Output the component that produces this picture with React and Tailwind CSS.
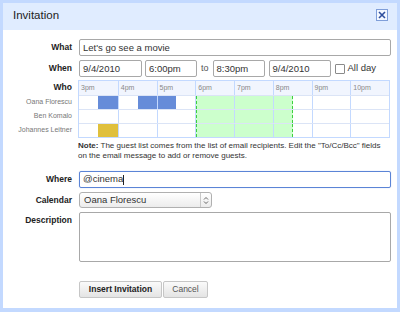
import { useState } from 'react';

const hours = ['3pm', '4pm', '5pm', '6pm', '7pm', '8pm', '9pm', '10pm'];

// busy slots per guest, in half-hour steps from 3pm (index 0 = 3:00-3:30)
const guests = [
  { name: 'Oana Florescu', busy: { 1: 'blue', 3: 'blue', 4: 'blue' } },
  { name: 'Ben Komalo', busy: {} },
  { name: 'Johannes Leitner', busy: { 1: 'yellow' } },
];

const label = "w-[70px] shrink-0 text-right pr-[1px] text-[8.5px] font-bold text-[#222] font-['Liberation_Sans',sans-serif]";
const input = "h-[17px] border border-[#a8a8a8] rounded-[2px] bg-white px-[3px] text-[9.5px] text-[#333] leading-[15px] font-['Liberation_Sans',sans-serif]";

function HalfCell({ slot, color }) {
  const inEvent = slot >= 6 && slot <= 10;
  let bg = '';
  if (color === 'blue') bg = 'bg-[#668cd9]';
  else if (color === 'yellow') bg = 'bg-[#e0c03c]';
  else if (inEvent) bg = 'bg-[#ccffcc]';
  const edge =
    slot === 6 ? 'border-l border-dashed border-l-[#3fcf3f]' : slot === 10 ? 'border-r border-dashed border-r-[#3fcf3f]' : '';
  return <div className={`flex-1 h-full ${bg} ${edge}`} />;
}

function Chart() {
  return (
    <div className="w-[312px] border border-[#c3d9ff] font-['Liberation_Sans',sans-serif]">
      <div className="flex h-[14px] bg-[#f1f5fe]">
        {hours.map((h, i) => (
          <div
            key={h}
            className={`w-[39px] h-full pl-[2px] text-[7px] leading-[13px] text-[#888] ${i ? 'border-l border-[#c3d9ff]' : ''}`}
          >
            {h}
          </div>
        ))}
      </div>
      {guests.map((g) => (
        <div key={g.name} className="flex h-[14px] border-t border-[#dbe4f6]">
          {hours.map((h, i) => (
            <div key={h} className={`w-[39px] h-full flex ${i ? 'border-l border-[#c3d9ff]' : ''}`}>
              <HalfCell slot={i * 2} color={g.busy[i * 2]} />
              <HalfCell slot={i * 2 + 1} color={g.busy[i * 2 + 1]} />
            </div>
          ))}
        </div>
      ))}
    </div>
  );
}

export default function App() {
  const [where, setWhere] = useState('@cinema');

  return (
    <div className="w-[400px] h-[312px] bg-[#c3d9ff] pt-[3px] px-[3px] pb-[4px] flex flex-col">
      <div className="h-[27px] shrink-0 bg-[#e0ecff] flex items-center justify-between pl-[10px] pr-[9px]">
        <span className="text-[11.5px] text-[#222] font-['Liberation_Sans',sans-serif] mt-[-2px]">Invitation</span>
        <div className="w-[12px] h-[12px] border border-[#7f9ed9] bg-[#f4f8ff] flex items-center justify-center mt-[-3px]">
          <svg width="8" height="8" viewBox="0 0 8 8">
            <path d="M1 1 L7 7 M7 1 L1 7" stroke="#2f4f9e" strokeWidth="1.6" />
          </svg>
        </div>
      </div>

      <div className="flex-1 bg-white pr-[6px]">
        {/* What */}
        <div className="flex items-center mt-[9px]">
          <div className={label}>What</div>
          <div className={`${input} ml-[6px] flex-1`}>Let's go see a movie</div>
        </div>

        {/* When */}
        <div className="flex items-center mt-[4px]">
          <div className={label}>When</div>
          <div className="ml-[6px] flex items-center">
            <div className={`${input} w-[63px]`}>9/4/2010</div>
            <div className={`${input} w-[52px] ml-[3px]`}>6:00pm</div>
            <span className="mx-[4px] text-[9px] text-[#555] font-['Liberation_Sans',sans-serif]">to</span>
            <div className={`${input} w-[52px]`}>8:30pm</div>
            <div className={`${input} w-[62px] ml-[4px]`}>9/4/2010</div>
            <div className="w-[10px] h-[10px] ml-[4px] border border-[#8a8a8a] rounded-[1px] bg-white" />
            <span className="ml-[3px] text-[9.5px] text-[#333] font-['Liberation_Sans',sans-serif]">All day</span>
          </div>
        </div>

        {/* Who */}
        <div className="flex mt-[3px]">
          <div className="w-[70px] shrink-0 flex flex-col items-end pr-[1px]">
            <div className="h-[15px] flex items-center text-[8.5px] font-bold text-[#222] font-['Liberation_Sans',sans-serif]">Who</div>
            {guests.map((g) => (
              <div key={g.name} className="h-[14px] flex items-center text-[7px] text-[#777] font-['Liberation_Sans',sans-serif]">
                {g.name}
              </div>
            ))}
          </div>
          <div className="ml-[5px]">
            <Chart />
            <p className="mt-[3px] text-[8px] leading-[10px] text-[#333] font-['Liberation_Sans',sans-serif]">
              <b>Note:</b> The guest list comes from the list of email recipients. Edit the "To/Cc/Bcc" fields
              <br />
              on the email message to add or remove guests.
            </p>
          </div>
        </div>

        {/* Where */}
        <div className="flex items-center mt-[10px]">
          <div className={label}>Where</div>
          <div className="ml-[6px] flex-1 h-[17px] border border-[#5b84d6] rounded-[2px] px-[3px] flex items-center shadow-[0_0_1px_#9db7ee]">
            <span className="text-[9.5px] text-[#333] font-['Liberation_Sans',sans-serif]">{where}</span>
            <span className="w-px h-[10px] bg-[#222]" />
          </div>
        </div>

        {/* Calendar */}
        <div className="flex items-center mt-[4px]">
          <div className={label}>Calendar</div>
          <div className="ml-[6px] w-[133px] h-[16px] border border-[#b0b0b0] rounded-[3px] bg-gradient-to-b from-white to-[#ececec] flex items-center">
            <span className="flex-1 pl-[4px] text-[9.5px] text-[#333] font-['Liberation_Sans',sans-serif]">Oana Florescu</span>
            <div className="w-[11px] h-full border-l border-[#c8c8c8] flex items-center justify-center">
              <svg width="6" height="9" viewBox="0 0 6 9">
                <path d="M1 3.5 L3 1.5 L5 3.5 M1 5.5 L3 7.5 L5 5.5" stroke="#555" strokeWidth="0.9" fill="none" />
              </svg>
            </div>
          </div>
        </div>

        {/* Description */}
        <div className="flex items-start mt-[4px]">
          <div className={`${label} pt-[2px]`}>Description</div>
          <div className={`${input} ml-[6px] flex-1 h-[50px]`} />
        </div>

        {/* Buttons */}
        <div className="flex mt-[19px] ml-[76px] gap-[1px]">
          <button className="h-[17px] w-[83px] border border-[#c6c6c6] rounded-[2px] bg-gradient-to-b from-[#fafafa] to-[#e4e4e4] text-[8.5px] font-bold text-[#222] font-['Liberation_Sans',sans-serif]">
            Insert Invitation
          </button>
          <button
            onClick={() => setWhere('@cinema')}
            className="h-[17px] w-[45px] border border-[#c6c6c6] rounded-[2px] bg-gradient-to-b from-[#fafafa] to-[#e4e4e4] text-[8.5px] text-[#555] font-['Liberation_Sans',sans-serif]"
          >
            Cancel
          </button>
        </div>
      </div>
    </div>
  );
}
